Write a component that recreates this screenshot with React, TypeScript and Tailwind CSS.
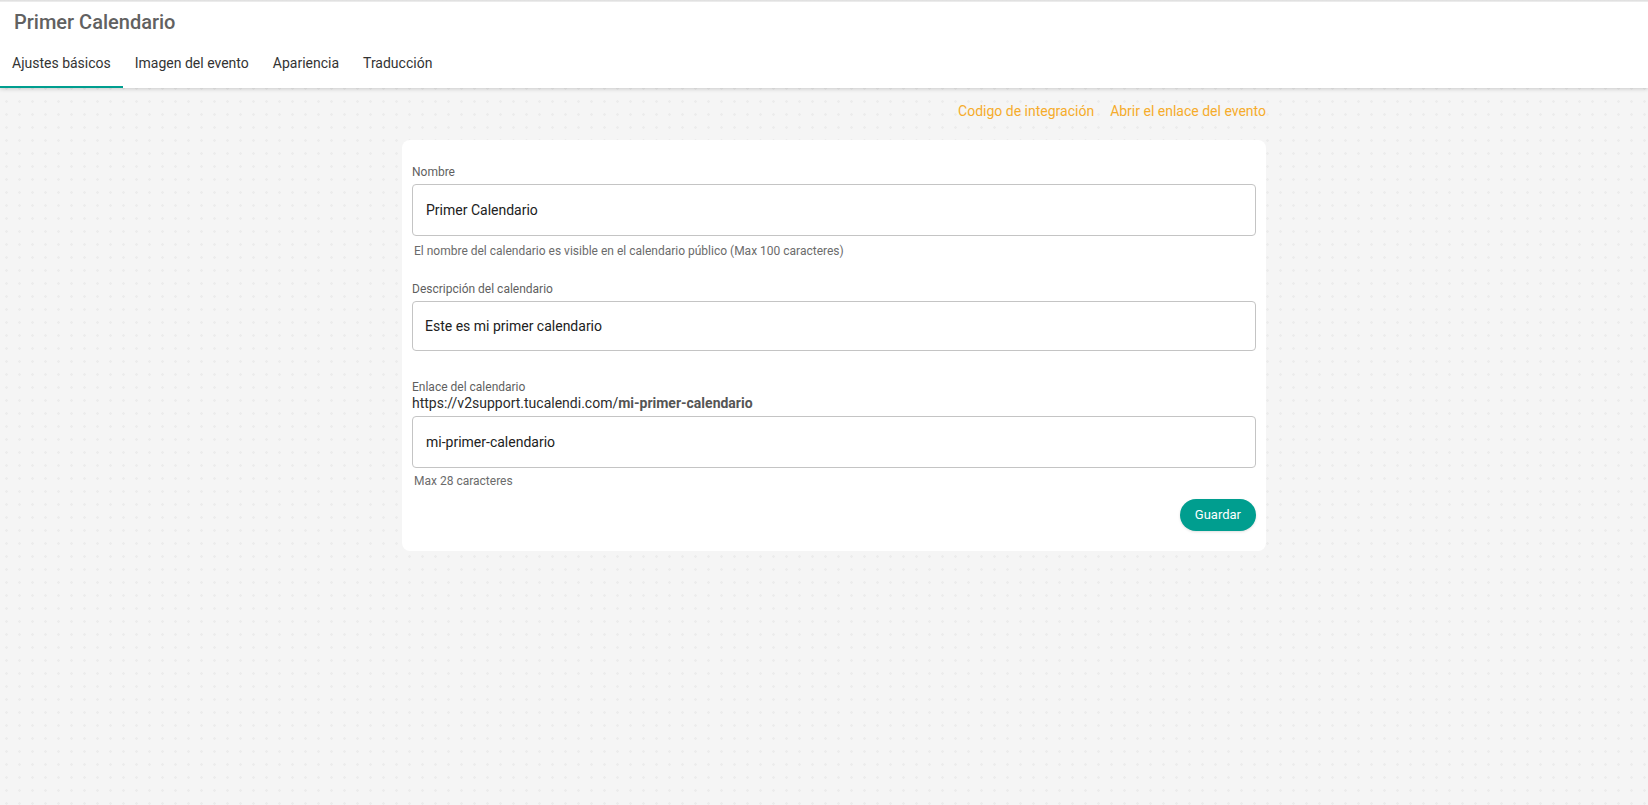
import { useState } from 'react';

const tabs = ['Ajustes básicos', 'Imagen del evento', 'Apariencia', 'Traducción'];

function Field({
  label,
  value,
  help,
  h = 'h-[52px]',
  px = 'px-[14px]',
}: {
  label: string;
  value: string;
  help?: string;
  h?: string;
  px?: string;
}) {
  return (
    <div>
      <div className="text-[12px] leading-4 text-[#5f5f5f] mb-1">{label}</div>
      <input
        defaultValue={value}
        className={`w-full ${h} rounded border border-[#c4c4c4] ${px} text-[14px] text-[#212121] outline-none`}
      />
      {help && <div className="mt-[7px] pl-[2px] text-[12px] leading-4 text-[#6b6b6b]">{help}</div>}
    </div>
  );
}

export default function App() {
  const [active, setActive] = useState(0);

  return (
    <div
      className="min-h-screen bg-[#f5f5f5] bg-[radial-gradient(circle,#ececec_1px,transparent_1.5px)] bg-[length:13px_13px] bg-[position:0px_4px]"
      style={{ fontFamily: 'Roboto, "Noto Sans", sans-serif' }}
    >
      {/* === HEADER === */}
      <header className="bg-white shadow-[0_1px_4px_rgba(0,0,0,0.18)]">
        <div className="h-[2px] bg-gradient-to-b from-[#dcdcdc] to-[#f0f0f0]" />
        <div className="h-10 flex items-center pl-[14px] text-[20px] font-medium text-[#616161]">
          Primer Calendario
        </div>
        <nav className="flex h-[46px]">
          {tabs.map((t, i) => (
            <button
              key={t}
              onClick={() => setActive(i)}
              className="relative px-3 pb-[3px] text-[14px] text-[#333] cursor-pointer"
            >
              {t}
              {active === i && <span className="absolute left-0 right-0 bottom-0 h-[2px] bg-[#009e8f]" />}
            </button>
          ))}
        </nav>
      </header>

      {/* === CONTENT === */}
      <main className="mx-auto w-[884px] pl-5">
        <div className="flex justify-end gap-4 pt-[13px] pb-[19px] text-[14px] leading-5 text-[#f6ac2b]">
          <a className="cursor-pointer">Codigo de integración</a>
          <a className="cursor-pointer">Abrir el enlace del evento</a>
        </div>

        <div className="bg-white rounded-lg px-[10px] pt-6 pb-5">
          <Field
            label="Nombre"
            value="Primer Calendario"
            help="El nombre del calendario es visible en el calendario público (Max 100 caracteres)"
            px="px-[13px]"
          />

          <div className="mt-[22px]">
            <Field label="Descripción del calendario" value="Este es mi primer calendario" h="h-[50px]" px="px-3" />
          </div>

          <div className="mt-7">
            <div className="text-[12px] leading-4 text-[#5f5f5f]">Enlace del calendario</div>
            <div className="text-[14px] leading-4 text-[#2b2b2b] mb-[5px]">
              https://v2support.tucalendi.com/<span className="font-bold text-[#555]">mi-primer-calendario</span>
            </div>
            <input
              defaultValue="mi-primer-calendario"
              className="w-full h-[52px] rounded border border-[#c4c4c4] px-[13px] text-[14px] text-[#212121] outline-none"
            />
            <div className="mt-[5px] pl-[2px] text-[12px] leading-4 text-[#6b6b6b]">Max 28 caracteres</div>
          </div>

          <div className="flex justify-end mt-[10px]">
            <button className="h-8 px-[15px] rounded-full bg-[#009e8f] text-white text-[13px] shadow-sm">
              Guardar
            </button>
          </div>
        </div>
      </main>
    </div>
  );
}
